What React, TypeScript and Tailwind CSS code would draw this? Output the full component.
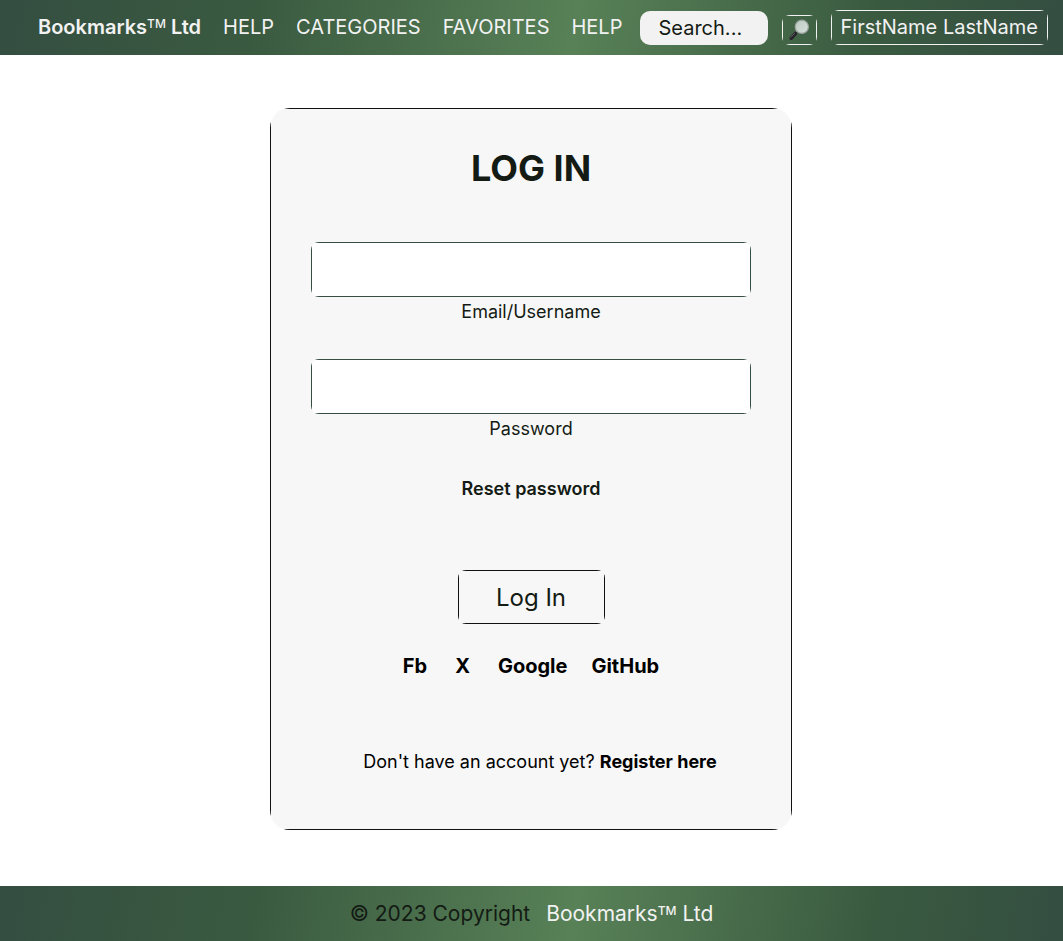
import type { ReactNode } from "react";

const outline =
  "[background:linear-gradient(var(--line),var(--line))_top/100%_1px_no-repeat,linear-gradient(var(--line),var(--line))_bottom/100%_1px_no-repeat,linear-gradient(var(--line),var(--line))_left/1px_100%_no-repeat,linear-gradient(var(--line),var(--line))_right/1px_100%_no-repeat,var(--fill)]";

const band =
  "bg-[linear-gradient(100deg,#344e41_0%,#3a5a40_24%,#588157_54%,#3a5a40_82%,#344e41_100%)]";

function NavLink({ children }: { children: ReactNode }) {
  return (
    <a href="#" className="whitespace-nowrap">
      {children}
    </a>
  );
}

function BrandName() {
  return (
    <>
      Bookmarks<sup className="top-0 align-[6px] text-xs leading-none font-medium">TM</sup> Ltd
    </>
  );
}

function MagnifierIcon() {
  return (
    <svg viewBox="0 0 24 24" className="size-6" aria-hidden="true">
      <defs>
        <linearGradient id="glass" x1="0" y1="0" x2="1" y2="1">
          <stop offset="0" stopColor="#b9c8c1" />
          <stop offset="1" stopColor="#dbe2dc" />
        </linearGradient>
      </defs>
      <path d="M10.2 13.2 8.6 15" stroke="#9a9a9a" strokeWidth="1.6" />
      <path d="M8.6 15.4 4.2 20.2" stroke="#252329" strokeWidth="3.6" strokeLinecap="round" />
      <path d="M7.8 15.2 3.8 19.4" stroke="#6b6771" strokeWidth="0.8" strokeLinecap="round" />
      <circle cx="14.8" cy="8.8" r="6.6" fill="url(#glass)" stroke="#9aa39d" strokeWidth="1.2" />
    </svg>
  );
}

function Field({ id, label, type }: { id: string; label: string; type: string }) {
  return (
    <div className="flex flex-col items-center">
      <input
        id={id}
        type={type}
        className={`h-[55px] w-full rounded-lg px-4 text-lg outline-none [--fill:#fff] [--line:#344e41] ${outline}`}
      />
      <label htmlFor={id} className="mt-[1px] text-lg leading-7">
        {label}
      </label>
    </div>
  );
}

export default function App() {
  return (
    <div className="flex min-h-screen flex-col bg-white font-['Inter',sans-serif] text-[#141b14]">
      <header className={`flex h-[55px] items-center pr-[15px] pl-[38px] text-xl text-[#f2f2f2] ${band}`}>
        <nav className="flex items-center gap-[22px] pb-0.5">
          <a href="#" className="font-semibold whitespace-nowrap">
            <BrandName />
          </a>
          <NavLink>HELP</NavLink>
          <NavLink>CATEGORIES</NavLink>
          <NavLink>FAVORITES</NavLink>
          <NavLink>HELP</NavLink>
        </nav>
        <form className="ml-auto flex items-center gap-[14px]" onSubmit={(e) => e.preventDefault()}>
          <input
            type="text"
            aria-label="Search"
            placeholder="Search..."
            className="h-[34px] w-32 rounded-[10px] bg-[#f2f2f2] pr-2 pl-[19px] text-xl text-[#141b14] outline-none placeholder:text-[#141b14]"
          />
          <button
            type="submit"
            aria-label="Submit search"
            className={`mt-1 flex h-[30px] w-[35px] items-center justify-center rounded-lg [--fill:transparent] [--line:#f2f2f2] ${outline}`}
          >
            <MagnifierIcon />
          </button>
          <button
            type="button"
            className={`h-[35px] rounded-lg px-[10px] pb-0.5 whitespace-nowrap [--fill:transparent] [--line:#f2f2f2] ${outline}`}
          >
            FirstName LastName
          </button>
        </form>
      </header>

      <main className="flex grow items-start justify-center pt-[53px] pr-[17px] pb-14 pl-4">
        <form
          onSubmit={(e) => e.preventDefault()}
          className={`flex w-full max-w-[522px] flex-col rounded-[20px] px-[41px] pt-9 pb-[54px] [--fill:#f7f7f7] [--line:#111] ${outline}`}
        >
          <h1 className="text-center text-4xl leading-12 font-bold">LOG IN</h1>
          <div className="mt-[50px] flex flex-col gap-[33px]">
            <Field id="username" label="Email/Username" type="text" />
            <Field id="password" label="Password" type="password" />
          </div>
          <a href="#" className="mt-8 self-center text-lg leading-7 font-semibold">
            Reset password
          </a>
          <button
            type="submit"
            className={`mt-[67px] h-[54px] w-[147px] self-center rounded-lg pt-0.5 text-2xl [--fill:transparent] [--line:#111] ${outline}`}
          >
            Log In
          </button>
          <div className="mt-7 flex justify-center text-xl leading-7 font-bold text-black">
            <a href="#">Fb</a>
            <a href="#" className="ml-7">X</a>
            <a href="#" className="ml-7">Google</a>
            <a href="#" className="ml-6">GitHub</a>
          </div>
          <p className="mt-[68px] pl-[18px] text-center text-lg leading-7 text-black">
            Don't have an account yet?{" "}
            <a href="#" className="font-bold">
              Register here
            </a>
          </p>
        </form>
      </main>

      <footer className={`flex h-[55px] items-center justify-center gap-4 text-[21px] ${band}`}>
        <span>© 2023 Copyright</span>
        <a href="#" className="text-[#f2f2f2]">
          <BrandName />
        </a>
      </footer>
    </div>
  );
}
